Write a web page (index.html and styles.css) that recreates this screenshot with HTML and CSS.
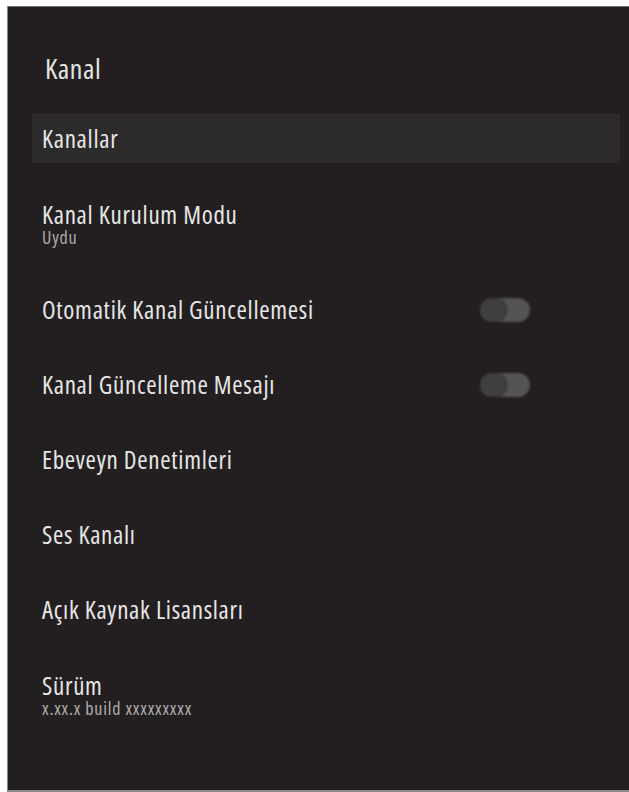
FILE: index.html
```html
<!DOCTYPE html>
<html lang="tr">
<head>
  <meta charset="UTF-8">
  <meta name="viewport" content="width=device-width, initial-scale=1.0">
  <title>Kanal</title>
  <link rel="stylesheet" href="styles.css">
</head>
<body>
  <div class="panel">
    <h2 class="panel__title">Kanal</h2>
    <ul class="menu">
      <li class="menu__item menu__item--active">
        <span class="menu__label">Kanallar</span>
      </li>
      <li class="menu__item menu__item--tall">
        <span class="menu__label">Kanal Kurulum Modu</span>
        <span class="menu__sub">Uydu</span>
      </li>
      <li class="menu__item menu__item--toggle">
        <span class="menu__label">Otomatik Kanal Güncellemesi</span>
        <span class="switch"><span class="switch__knob"></span></span>
      </li>
      <li class="menu__item menu__item--toggle">
        <span class="menu__label">Kanal Güncelleme Mesajı</span>
        <span class="switch"><span class="switch__knob"></span></span>
      </li>
      <li class="menu__item">
        <span class="menu__label">Ebeveyn Denetimleri</span>
      </li>
      <li class="menu__item">
        <span class="menu__label">Ses Kanalı</span>
      </li>
      <li class="menu__item">
        <span class="menu__label">Açık Kaynak Lisansları</span>
      </li>
      <li class="menu__item menu__item--tall">
        <span class="menu__label">Sürüm</span>
        <span class="menu__sub">x.xx.x build xxxxxxxxx</span>
      </li>
    </ul>
  </div>
</body>
</html>
```

FILE: styles.css
```css
* {
  box-sizing: border-box;
}

body {
  margin: 0;
  padding: 6px 0 0 7px;
  background-color: #fff;
  font-family: "Open Sans", "DejaVu Sans Condensed", sans-serif;
  font-stretch: 75%;
}

.panel {
  height: 786px;
  background-color: #231f20;
  border-top: 1px solid #6f6d6e;
  border-left: 1px solid #8a8889;
  border-bottom: 2px solid #8b8b8b;
  padding-top: 47px;
}

.panel__title {
  margin: 0 0 32px 37px;
  font-size: 28px;
  line-height: 28px;
  font-weight: 500;
  letter-spacing: 0.5px;
  color: #e4e4e4;
}

.menu {
  list-style: none;
  margin: 0 9px 0 24px;
  padding: 0;
  display: flex;
  flex-direction: column;
  gap: 26px;
}

.menu__item {
  min-height: 49px;
  padding-left: 10px;
  display: flex;
  flex-direction: column;
  justify-content: center;
}

.menu__item--active {
  background-color: #2c2a2b;
}

.menu__item--tall {
  min-height: 70px;
}

.menu__item--toggle {
  flex-direction: row;
  align-items: center;
  justify-content: space-between;
  padding-right: 90px;
}

.menu__label {
  font-size: 25px;
  line-height: 25px;
  font-weight: 500;
  letter-spacing: 0.7px;
  color: #e6e6e6;
}

.menu__sub {
  margin-top: 1px;
  font-size: 18px;
  line-height: 18px;
  letter-spacing: 0.8px;
  color: #aeadad;
}

.switch {
  position: relative;
  width: 50px;
  height: 24px;
  border-radius: 12px;
  background-color: #555354;
  filter: blur(0.8px);
}

.switch__knob {
  position: absolute;
  left: 0;
  top: 0;
  width: 26px;
  height: 24px;
  border-radius: 12px;
  background-color: #403e3f;
  box-shadow: 1px 0 2px rgba(0, 0, 0, 0.5);
}
```
